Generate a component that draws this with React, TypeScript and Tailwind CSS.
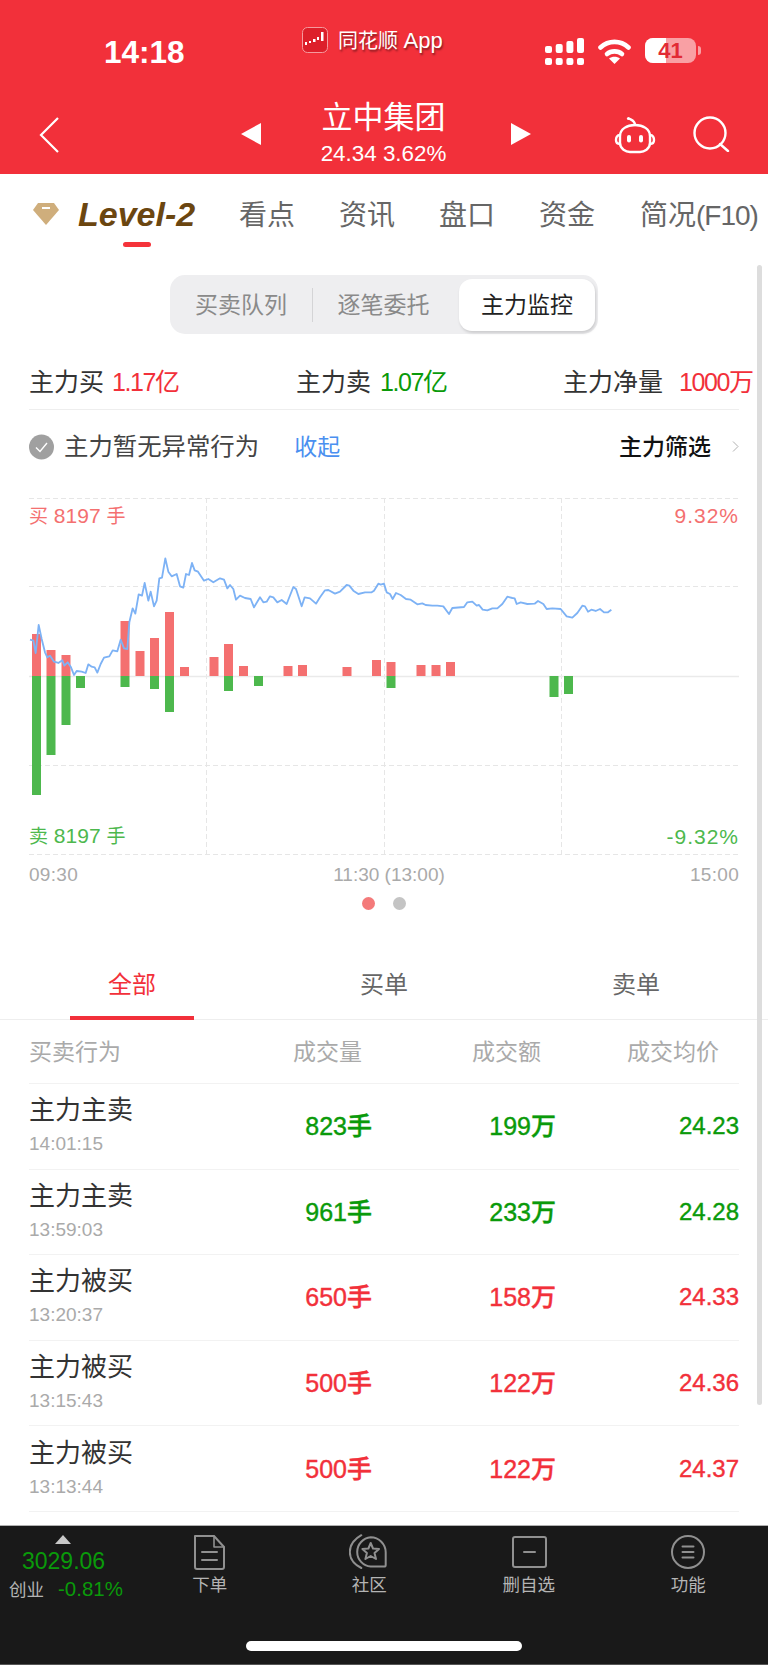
import React from "react";

const RED = "text-[#f2303a]";
const GREEN = "text-[#0a9a0a]";

const bars: [number, number, number][] = [
  [32, 42, 119], [46.5, 26, 79], [61.5, 21, 49], [76, 0, 12], [120.5, 55, 11], [135.5, 25, 0],
  [150, 38, 13], [165, 64, 36], [180, 9, 0], [209.5, 19, 0], [224, 32, 15], [239, 10, 0],
  [254, 0, 10], [283.5, 10, 0], [298, 11, 0], [342.5, 9, 0], [372, 16, 0], [386.5, 14, 12],
  [416.5, 11, 0], [431.5, 11, 0], [446, 14, 0], [549.5, 0, 21], [564, 0, 18],
];

const lineA =
  "90,452 100,455 107,492 116,408 125,450 135,490 142,505 150,500 162,518 175,522 187,514 193,530 203,520 213,535 222,558 230,546 245,548 257,552 265,526 275,533 284,535 292,551 302,525 312,506 328,502 338,484 352,487 362,452 372,478 382,480 388,400 398,358 406,374 416,316 426,320 434,282 445,335 452,308 462,352 470,335 478,268 486,266 496,208 505,248 515,262 530,255 540,292 550,296 558,255 567,258 576,222 584,244 594,248 612,275 625,270 640,280 660,268 672,272 682,298 690,288 700,300 708,332 720,320 735,327 752,330 762,355 780,325 790,340 800,338 810,322 820,325 832,340 845,333 860,345 880,294 888,300 905,352 914,325 930,328 948,344 960,325 975,304 985,303 1005,314 1020,308 1040,288 1048,290 1060,305 1075,315 1095,310 1115,310 1122,305 1135,284 1142,287 1152,284";
const lineB: [number, number][] = [
  [8, 310], [18, 315], [26, 330], [36, 312], [50, 318], [66, 330], [80, 332], [100, 346], [115, 343], [125, 348], [145, 350], [160, 350], [178, 352], [195, 375], [205, 357], [240, 354], [250, 340], [265, 338], [278, 350], [285, 348], [296, 362], [310, 364], [325, 358], [340, 358], [355, 345], [370, 323], [385, 327], [392, 328], [398, 345], [410, 340], [430, 345], [452, 344], [462, 336], [478, 345], [488, 360], [505, 358], [530, 360], [548, 382], [565, 386], [580, 372], [595, 350], [603, 352], [612, 368], [622, 362], [635, 366], [648, 360], [660, 370], [672, 370], [682, 362],
];
const line = lineA + " " + lineB.map(([x, y]) => `${x + 1152},${y}`).join(" ");

const rows = [
  { t: "主力主卖", time: "14:01:15", v: "823手", a: "199万", p: "24.23", c: GREEN },
  { t: "主力主卖", time: "13:59:03", v: "961手", a: "233万", p: "24.28", c: GREEN },
  { t: "主力被买", time: "13:20:37", v: "650手", a: "158万", p: "24.33", c: RED },
  { t: "主力被买", time: "13:15:43", v: "500手", a: "122万", p: "24.36", c: RED },
  { t: "主力被买", time: "13:13:44", v: "500手", a: "122万", p: "24.37", c: RED },
];

function Chart() {
  return (
    <svg viewBox="0 0 768 366" className="block w-[768px] h-[366px]">
      <g stroke="#e6e6e6" strokeWidth="1" strokeDasharray="5 3" fill="none">
        <path d="M29 9.5H739M29 97.5H739M29 276.5H739M29 365.5H739" />
        <path d="M206.5 9V366M384.5 9V366M561.5 9V366" />
      </g>
      <path d="M29 187.5H739" stroke="#eaeaea" strokeWidth="1.5" />
      {bars.map(([x, r, g], i) => (
        <g key={i}>
          {r > 0 && <rect x={x} y={187 - r} width="9" height={r} fill="#f47070" />}
          {g > 0 && <rect x={x} y={187} width="9" height={g} fill="#4db84d" />}
        </g>
      ))}
      <g transform="scale(0.33333)">
        <polyline points={line} fill="none" stroke="#7db2f5" strokeWidth="5.5" strokeLinejoin="round" />
      </g>
    </svg>
  );
}

function TabIcon({ children }: { children: React.ReactNode }) {
  return (
    <svg viewBox="0 0 40 36" className="w-[40px] h-[36px]" fill="none" stroke="#909090" strokeWidth="2" strokeLinecap="round" strokeLinejoin="round">
      {children}
    </svg>
  );
}

function BottomTab({ label, children }: { label: string; children: React.ReactNode }) {
  return (
    <div className="flex flex-col items-center">
      <TabIcon>{children}</TabIcon>
      <span className="mt-[4px] text-[17.5px] leading-[22px] text-[#b4b4b4]">{label}</span>
    </div>
  );
}

function ChartLabel({ side, children }: { side: string; children: React.ReactNode }) {
  return <div className={`absolute text-[21px] leading-[26px] whitespace-nowrap ${side}`}>{children}</div>;
}

export default function App() {
  return (
    <div className="relative w-[768px] h-[1665px] overflow-hidden bg-white flex flex-col font-['Liberation_Sans','Noto_Sans_CJK_SC',sans-serif]">
      <header className="h-[174px] shrink-0 bg-[#f2303a] text-white">
        <div className="h-[96px] flex items-start">
          <div className="w-[302px] pl-[104px] pt-[34px] text-[31.5px] leading-[36px] font-semibold">14:18</div>
          <svg viewBox="0 0 26 26" className="w-[26px] h-[26px] mt-[27px]">
            <rect x="0.5" y="0.5" width="25" height="25" rx="5" fill="#dd1f2a" stroke="#f59a9e" />
            <g fill="#fff">
              <rect x="3" y="15" width="2" height="3" />
              <rect x="7" y="14" width="2" height="2" />
              <rect x="11" y="12" width="2.5" height="3" />
              <rect x="15" y="10" width="2" height="3" />
              <rect x="19" y="5" width="2.5" height="9" />
            </g>
          </svg>
          <div className="ml-[10px] w-[207px] mt-[27px] text-[20px] leading-[28px] [text-shadow:1px_2px_2px_rgba(0,0,0,0.45)]">
            同花顺 <span className="text-[22px]">App</span>
          </div>
          <svg viewBox="0 0 39 27" className="mt-[38px] w-[39px] h-[27px]" fill="#fff">
            <rect x="0" y="8" width="7" height="7" rx="2" />
            <rect x="10.7" y="6" width="7" height="9" rx="2" />
            <rect x="21.4" y="3" width="7" height="12" rx="2" />
            <rect x="32" y="0" width="7" height="15" rx="2" />
            <rect x="0" y="20" width="7" height="7" rx="2" />
            <rect x="10.7" y="20" width="7" height="7" rx="2" />
            <rect x="21.4" y="20" width="7" height="7" rx="2" />
            <rect x="32" y="20" width="7" height="7" rx="2" />
          </svg>
          <svg viewBox="0 0 33 25" className="ml-[14px] mt-[39px] w-[33px] h-[25px]" fill="none" stroke="#fff" strokeWidth="4.6" strokeLinecap="round">
            <path d="M2.5 8.5C10.5 1 22.5 1 30.5 8.5" />
            <path d="M9 15C13 11.5 20 11.5 24 15" />
            <path d="M16.5 25L11 19.5C14 17 19 17 22 19.5Z" fill="#fff" stroke="none" />
          </svg>
          <div className="ml-[14px] mt-[38px] flex items-center">
            <div className="relative w-[51px] h-[25px] rounded-[8px] bg-[#f9a0a4]">
              <div className="absolute left-0 top-0 bottom-0 w-[21px] rounded-l-[8px] bg-white" />
              <div className="absolute inset-0 flex items-center justify-center text-[#e22a34] text-[22px] font-bold leading-[25px]">41</div>
            </div>
            <div className="ml-[2px] w-[3px] h-[9px] rounded-r-full bg-[#f9a0a4]" />
          </div>
        </div>
        <div className="h-[78px] flex items-start">
          <div className="w-[241px] pl-[38px] pt-[21px]">
            <svg viewBox="0 0 22 36" className="w-[22px] h-[36px]" fill="none" stroke="#fff" strokeWidth="2.2">
              <path d="M20 1L3 18L20 35" />
            </svg>
          </div>
          <div className="w-[20px] pt-[27px]">
            <div className="w-0 h-0 border-y-[11px] border-y-transparent border-r-[20px] border-r-white" />
          </div>
          <div className="w-[250px] pr-[5px] pt-[4px] flex flex-col items-center">
            <div className="text-[31px] leading-[36px]">立中集团</div>
            <div className="mt-[5px] text-[22.4px] leading-[26px]">24.34 3.62%</div>
          </div>
          <div className="w-[20px] pt-[27px]">
            <div className="w-0 h-0 border-y-[11px] border-y-transparent border-l-[20px] border-l-white" />
          </div>
          <svg viewBox="0 0 42 38" className="ml-[83px] mt-[20px] w-[42px] h-[38px]" fill="none" stroke="#fff" strokeWidth="2.4" strokeLinecap="round">
            <path d="M21 9C21 5 18 4 16 3" />
            <circle cx="14.5" cy="2.5" r="1.6" fill="#fff" stroke="none" />
            <path d="M6 20C6 13 13 9 21 9C29 9 36 13 36 20V27C36 33 30 36 26 36H16C12 36 6 33 6 27Z" />
            <path d="M6 19C3 19 2 22 2 24C2 26 3 28 6 28" />
            <path d="M36 19C39 19 40 22 40 24C40 26 39 28 36 28" />
            <rect x="13" y="19" width="4" height="7.5" rx="2" fill="#fff" stroke="none" />
            <rect x="25" y="19" width="4" height="7.5" rx="2" fill="#fff" stroke="none" />
          </svg>
          <svg viewBox="0 0 38 36" className="ml-[37px] mt-[20px] w-[38px] h-[36px]" fill="none" stroke="#fff" strokeWidth="2.4" strokeLinecap="round">
            <circle cx="17" cy="17" r="15.5" />
            <path d="M27 28L35 35" />
          </svg>
        </div>
      </header>

      <main className="relative flex-1 min-h-0 overflow-hidden">
        <div className="absolute left-[757px] top-[91px] w-[5px] h-[1140px] bg-[#dddddd] rounded-full" />

        <div className="relative h-[74px] flex items-start text-[#666] text-[28px] leading-[34px]">
          <svg viewBox="0 0 26 22" className="ml-[33px] mt-[29px] w-[26px] h-[22px]">
            <path d="M5 0H21L26 7L13 22L0 7Z" fill="#cfae7c" />
            <rect x="9" y="4" width="8" height="2" fill="#fff" />
          </svg>
          <div className="ml-[19px] w-[161px] pt-[22px] text-[34px] leading-[36px] font-bold italic text-[#6b4610]">Level-2</div>
          <div className="w-[100px] pt-[25px]">看点</div>
          <div className="w-[100px] pt-[25px]">资讯</div>
          <div className="w-[100px] pt-[25px]">盘口</div>
          <div className="w-[101px] pt-[25px]">资金</div>
          <div className="pt-[25px] whitespace-nowrap">
            简况<span className="tracking-[-1px]">(F10)</span>
          </div>
          <div className="absolute left-[123px] top-[68px] w-[28px] h-[5px] rounded-full bg-[#f5333a]" />
        </div>

        <div className="ml-[170px] mt-[27px] w-[428px] h-[59px] rounded-[15px] bg-[#eeeef0] flex items-center text-[23px] leading-[30px] text-[#8a8a8a]">
          <div className="w-[142px] text-center">买卖队列</div>
          <div className="w-px h-[34px] bg-[#d4d4d6]" />
          <div className="w-[146px] text-center pr-[5px]">逐笔委托</div>
          <div className="w-[136px] h-[52px] rounded-[13px] bg-white shadow-[1px_2px_3px_rgba(0,0,0,0.15)] flex items-center justify-center text-[#222]">主力监控</div>
        </div>

        <div className="mx-[29px] h-[76px] pt-[20px] border-b border-[#eeeeee] flex items-center text-[25px] leading-[30px] text-[#333] whitespace-nowrap">
          <div className="w-[267px] shrink-0 flex items-center">
            <span>主力买</span>
            <span className={`ml-[8px] tracking-[-1.4px] ${RED}`}>1.17亿</span>
          </div>
          <div className="w-[267px] shrink-0 flex items-center">
            <span>主力卖</span>
            <span className={`ml-[9px] tracking-[-1.4px] ${GREEN}`}>1.07亿</span>
          </div>
          <div className="flex items-center shrink-0">
            <span>主力净量</span>
            <span className={`ml-[16px] tracking-[-1.4px] ${RED}`}>1000万</span>
          </div>
        </div>

        <div className="mx-[29px] h-[79px] pb-[6px] flex items-center text-[24.4px] leading-[30px] text-[#444]">
          <svg viewBox="0 0 25 26" className="w-[25px] h-[26px]">
            <circle cx="12.5" cy="13" r="12.5" fill="#a0a0a0" />
            <path d="M7 13.5L11 17.5L18 9" fill="none" stroke="#fff" strokeWidth="1.4" />
          </svg>
          <span className="ml-[10px]">主力暂无异常行为</span>
          <span className="ml-[35px] text-[#4a90f0] text-[23px]">收起</span>
          <span className="ml-auto text-[#111] text-[23px] font-medium">主力筛选</span>
          <svg viewBox="0 0 7 11" className="ml-[21px] w-[7px] h-[11px]" fill="none" stroke="#b0b0b0" strokeWidth="1">
            <path d="M1 0.5L6 5.5L1 10.5" />
          </svg>
        </div>

        <div className="relative h-[366px]">
          <Chart />
          <ChartLabel side="left-[29px] top-[14px] text-[#f47070]">
            <span className="text-[19px]">买</span> 8197 <span className="text-[19px]">手</span>
          </ChartLabel>
          <ChartLabel side="right-[29px] top-[14px] text-[#f47070] tracking-[1px]">9.32%</ChartLabel>
          <ChartLabel side="left-[29px] bottom-[5px] text-[#4db84d]">
            <span className="text-[19px]">卖</span> 8197 <span className="text-[19px]">手</span>
          </ChartLabel>
          <ChartLabel side="right-[29px] bottom-[5px] text-[#4db84d] tracking-[1px]">-9.32%</ChartLabel>
        </div>

        <div className="mx-[29px] mt-[8px] h-[24px] flex items-center justify-between text-[19px] leading-[24px] text-[#aaaaaa]">
          <span className="tracking-[0.3px]">09:30</span>
          <span className="ml-[10px]">11:30 (13:00)</span>
          <span className="tracking-[0.3px]">15:00</span>
        </div>

        <div className="mt-[10px] flex justify-center gap-[18px]">
          <div className="w-[13px] h-[13px] rounded-full bg-[#f47a7a]" />
          <div className="w-[13px] h-[13px] rounded-full bg-[#c4c4c4]" />
        </div>

        <div className="mt-[33px] h-[77px] border-b border-[#eeeeee] px-[6px] grid grid-cols-[252px_252px_252px] text-[24px] leading-[30px] text-[#666]">
          <div className="relative flex items-start justify-center pt-[27px] text-[#f2303a]">
            全部
            <div className="absolute left-[64px] bottom-[-1px] w-[124px] h-[4px] bg-[#f2303a]" />
          </div>
          <div className="flex items-start justify-center pt-[27px]">买单</div>
          <div className="flex items-start justify-center pt-[27px]">卖单</div>
        </div>

        <div className="mx-[29px] h-[64px] border-b border-[#f2f2f2] flex items-center text-[23px] leading-[30px] text-[#aaaaaa]">
          <div className="w-[264px] shrink-0">买卖行为</div>
          <div className="w-[69px] shrink-0 whitespace-nowrap">成交量</div>
          <div className="w-[110px] shrink-0 text-right whitespace-nowrap ml-[69px]">成交额</div>
          <div className="ml-auto pr-[20px] whitespace-nowrap">成交均价</div>
        </div>

        {rows.map((r, i) => (
          <div key={i} className="mx-[29px] h-[85.6px] border-b border-[#f2f2f2] flex items-center">
            <div className="w-[190px] shrink-0">
              <div className="text-[26px] leading-[30px] text-[#333] -mt-[2px]">{r.t}</div>
              <div className="mt-[8px] text-[19px] leading-[22px] text-[#aaaaaa]">{r.time}</div>
            </div>
            <div className={`w-[153px] shrink-0 text-right text-[25px] leading-[30px] font-medium [-webkit-text-stroke:0.4px] ${r.c}`}>{r.v}</div>
            <div className={`w-[184px] shrink-0 text-right text-[25px] leading-[30px] font-medium [-webkit-text-stroke:0.4px] ${r.c}`}>{r.a}</div>
            <div className={`w-[183px] shrink-0 text-right text-[24px] leading-[30px] font-medium [-webkit-text-stroke:0.4px] ${r.c}`}>{r.p}</div>
          </div>
        ))}
      </main>

      <footer className="relative h-[140px] shrink-0 bg-[#191919] border-t border-b border-t-[#b0b0b0] border-b-[#555555] flex items-start">
        <div className="w-[131px] relative h-full">
          <div className="absolute left-[55px] top-[9px] w-0 h-0 border-x-[8px] border-x-transparent border-b-[9px] border-b-[#c8c8c8]" />
          <div className={`absolute left-[22px] top-[21px] text-[23px] leading-[28px] ${GREEN}`}>3029.06</div>
          <div className="absolute left-[9px] top-[53px] text-[17.5px] leading-[22px] text-[#b4b4b4]">创业</div>
          <div className={`absolute left-[58px] top-[50px] text-[20.5px] leading-[26px] whitespace-nowrap ${GREEN}`}>-0.81%</div>
        </div>
        <div className="flex-1 grid grid-cols-[159.5px_159.5px_159.5px_159.5px] pt-[8px]">
          <BottomTab label="下单">
            <path d="M5 2H24L34 13V33Q34 35 32 35H7Q5 35 5 33Z" />
            <path d="M24 2V13H34" strokeWidth="1.6" />
            <path d="M12 18H27M12 26H27" />
          </BottomTab>
          <BottomTab label="社区">
            <path d="M12.3 1.2C-3 10 -3 26 12.3 34" />
            <path d="M21.7 3.3A15 15 0 0 1 36.7 18.3V31Q36.7 32.6 35 32.6H21.7A14.7 14.7 0 0 1 21.7 3.3Z" />
            <path d="M21.7 9L24 14.5L30 15L25.5 19L27 25L21.7 22L16.4 25L17.9 19L13.4 15L19.4 14.5Z" />
          </BottomTab>
          <BottomTab label="删自选">
            <rect x="4" y="3" width="33" height="30" rx="2" />
            <path d="M15 18H26" />
          </BottomTab>
          <BottomTab label="功能">
            <circle cx="20" cy="18" r="16" />
            <path d="M14.5 12.5H25.5M14.5 18H25.5M14.5 23.5H25.5" />
          </BottomTab>
        </div>
        <div className="absolute left-[246px] top-[115px] w-[276px] h-[10px] rounded-full bg-white" />
      </footer>
    </div>
  );
}
